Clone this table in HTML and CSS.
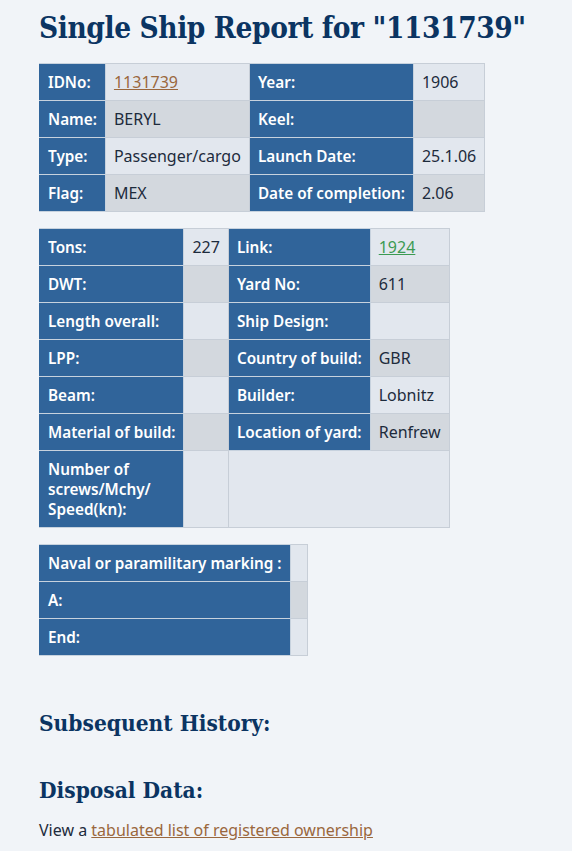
FILE: index.html
```html
<!DOCTYPE html>
<html lang="en">
<head>
<meta charset="utf-8">
<title>Single Ship Report</title>
<link rel="stylesheet" href="styles.css">
</head>
<body>
<main class="page">
  <h1 class="title">Single Ship Report for "1131739"</h1>

  <table class="ship t1">
    <tr class="odd">
      <th>IDNo:</th><td><a class="brown" href="#">1131739</a></td>
      <th>Year:</th><td>1906</td>
    </tr>
    <tr class="even">
      <th>Name:</th><td>BERYL</td>
      <th>Keel:</th><td></td>
    </tr>
    <tr class="odd">
      <th>Type:</th><td>Passenger/cargo</td>
      <th>Launch Date:</th><td>25.1.06</td>
    </tr>
    <tr class="even">
      <th>Flag:</th><td>MEX</td>
      <th>Date of completion:</th><td>2.06</td>
    </tr>
  </table>

  <table class="ship t2">
    <tr class="odd">
      <th>Tons:</th><td>227</td>
      <th>Link:</th><td><a class="green" href="#">1924</a></td>
    </tr>
    <tr class="even">
      <th>DWT:</th><td></td>
      <th>Yard No:</th><td>611</td>
    </tr>
    <tr class="odd">
      <th>Length overall:</th><td></td>
      <th>Ship Design:</th><td></td>
    </tr>
    <tr class="even">
      <th>LPP:</th><td></td>
      <th>Country of build:</th><td>GBR</td>
    </tr>
    <tr class="odd">
      <th>Beam:</th><td></td>
      <th>Builder:</th><td>Lobnitz</td>
    </tr>
    <tr class="even">
      <th>Material of build:</th><td></td>
      <th>Location of yard:</th><td>Renfrew</td>
    </tr>
    <tr class="odd tall">
      <th class="wrap">Number of<br>screws/Mchy/<br>Speed(kn):</th><td></td>
      <td colspan="2"></td>
    </tr>
  </table>

  <table class="ship t3">
    <tr class="odd"><th>Naval or paramilitary marking :</th><td class="blank"></td></tr>
    <tr class="even"><th>A:</th><td class="blank"></td></tr>
    <tr class="odd"><th>End:</th><td class="blank"></td></tr>
  </table>

  <h2 class="section first">Subsequent History:</h2>
  <h2 class="section">Disposal Data:</h2>
  <p class="note">View a <a class="brown" href="#">tabulated list of registered ownership</a></p>
</main>
</body>
</html>
```

FILE: styles.css
```css
html, body {
  margin: 0;
  padding: 0;
  background: #f1f4f8;
}

.page {
  padding: 6px 39px 0 39px;
  font-family: "Noto Sans", "Open Sans", sans-serif;
  font-size: 16px;
  color: #1d2b3c;
}

.title {
  font-family: "DejaVu Serif Condensed", "DejaVu Serif", serif;
  font-weight: bold;
  font-size: 29.5px;
  color: #0b3462;
  margin: 0 0 13px 0;
  line-height: 44px;
  letter-spacing: -0.4px;
  white-space: nowrap;
}

.ship {
  border-collapse: collapse;
  margin: 0 0 16px 0;
}

.ship th,
.ship td {
  border: 1px solid #c7ced7;
  padding: 8px 8px;
  line-height: 20px;
  text-align: left;
  vertical-align: middle;
  white-space: nowrap;
}

.ship td {
  font-size: 16px;
}

.ship th {
  background: #30649a;
  color: #ffffff;
  font-weight: 600;
  font-size: 15.3px;
  border-color: #c7d2de;
  border-left-color: #30649a;
}

.ship tr.odd td { background: #e2e7ee; }
.ship tr.even td { background: #d3d8de; }

.ship tr.tall th {
  vertical-align: top;
}

a.brown { color: #9a673d; text-decoration: underline; }
a.green { color: #3c9a52; text-decoration: underline; }

.section {
  font-family: "DejaVu Serif Condensed", "DejaVu Serif", serif;
  font-weight: bold;
  font-size: 22.5px;
  color: #0b3462;
  margin: 0;
  line-height: 32px;
}

.section.first { margin-top: 51px; }
.section + .section { margin-top: 35px; }

.note {
  margin: 13px 0 0 0;
  line-height: 22px;
}
```
